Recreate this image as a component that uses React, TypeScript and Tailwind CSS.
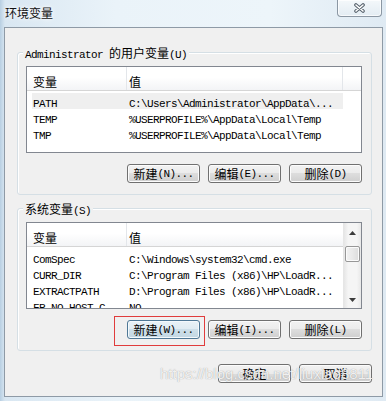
import React from "react";

const CJK_SPLIT = /([\u2E80-\u9FFF\uFF00-\uFFEF]+)/;
const CJK_TEST = /[\u2E80-\u9FFF\uFF00-\uFFEF]/;

function T({ s }: { s: string }) {
  const parts = s.split(CJK_SPLIT).filter(Boolean);
  return (
    <>
      {parts.map((p, i) =>
        CJK_TEST.test(p) ? (
          <span key={i} className="font-['Noto_Sans_CJK_SC',sans-serif] text-[12px] tracking-normal">
            {p}
          </span>
        ) : (
          <span key={i} className="font-['Liberation_Mono',monospace] text-[11px] tracking-[-0.6px] whitespace-pre">
            {p}
          </span>
        )
      )}
    </>
  );
}

function Btn({ label, focused }: { label: string; focused?: boolean }) {
  return (
    <div
      className={
        focused
          ? "w-[73px] h-[19px] flex items-center justify-center rounded-[3px] border border-[#4f7896] shadow-[inset_0_0_0_1px_#f4f9fc] bg-[linear-gradient(#e9f2f7_0%,#dfebf2_50%,#cddfe9_50%,#c2d7e3_100%)] text-black leading-[16px]"
          : "w-[73px] h-[19px] flex items-center justify-center rounded-[3px] border border-[#707070] shadow-[inset_0_0_0_1px_#fcfcfc] bg-[linear-gradient(#f2f2f2_0%,#ebebeb_50%,#dddddd_50%,#cfcfcf_100%)] text-black leading-[16px]"
      }
    >
      <T s={label} />
    </div>
  );
}

function Header() {
  return (
    <div className="h-[24px] shrink-0 flex border-b border-[#d5d5d5] bg-[linear-gradient(#ffffff_0%,#ffffff_45%,#f3f4f6_100%)] leading-[16px] text-black">
      <div className="w-[100px] pl-[6px] pt-[6px] border-r border-[#e3e6ea]">
        <T s="变量" />
      </div>
      <div className="w-[216px] pl-[2px] pt-[6px] border-r border-[#e3e6ea]">
        <T s="值" />
      </div>
      <div className="flex-1" />
    </div>
  );
}

function Rows({ rows, selected }: { rows: [string, string][]; selected?: number }) {
  return (
    <div className="pt-[2px] flex flex-col">
      {rows.map(([k, v], i) => (
        <div
          key={k}
          className={
            i === selected
              ? "ml-[5px] w-[311px] h-[16px] shrink-0 flex leading-[16px] text-black bg-[#efefef]"
              : "ml-[5px] w-[311px] h-[16px] shrink-0 flex leading-[16px] text-black"
          }
        >
          <div className="w-[95px] pl-[1px] whitespace-nowrap overflow-hidden">
            <T s={k} />
          </div>
          <div className="flex-1 pl-[2px] whitespace-nowrap overflow-hidden">
            <T s={v} />
          </div>
        </div>
      ))}
    </div>
  );
}

function UpArrow() {
  return (
    <svg width="7" height="4" viewBox="0 0 7 4">
      <path d="M3.5 0 L7 4 L0 4 Z" fill="#3c3c3c" />
    </svg>
  );
}
function DownArrow() {
  return (
    <svg width="7" height="4" viewBox="0 0 7 4">
      <path d="M0 0 L7 0 L3.5 4 Z" fill="#3c3c3c" />
    </svg>
  );
}

function GroupBox({
  label,
  children,
}: {
  label: string;
  children: React.ReactNode;
}) {
  return (
    <div className="relative w-[355px] rounded-[3px] border border-[#d5dfe5] shadow-[inset_1px_1px_0_#ffffff] pl-[8px] pr-[9px] pt-[13px] pb-[11px]">
      <div className="absolute -top-[9px] left-[5px] px-[2px] bg-[#f0f0f0] leading-[16px] text-black">
        <T s={label} />
      </div>
      {children}
    </div>
  );
}

export default function App() {
  const userRows: [string, string][] = [
    ["PATH", "C:\\Users\\Administrator\\AppData\\..."],
    ["TEMP", "%USERPROFILE%\\AppData\\Local\\Temp"],
    ["TMP", "%USERPROFILE%\\AppData\\Local\\Temp"],
  ];
  const sysRows: [string, string][] = [
    ["ComSpec", "C:\\Windows\\system32\\cmd.exe"],
    ["CURR_DIR", "C:\\Program Files (x86)\\HP\\LoadR..."],
    ["EXTRACTPATH", "D:\\Program Files (x86)\\HP\\LoadR..."],
    ["FP_NO_HOST_C...", "NO"],
  ];

  return (
    <div className="relative w-[386px] h-[401px] overflow-hidden flex flex-col bg-[linear-gradient(to_right,#b8cfe2_0px,#d9e7f2_5px,#eaf3f9_30%,#edf5fa_70%,#dfeaf3_100%)]">
      {/* Title bar */}
      <div className="h-[27px] shrink-0 flex items-start">
        <div className="pl-[5px] pt-[5px] leading-[16px] text-[#111] font-['Noto_Sans_CJK_SC',sans-serif] text-[12px] [text-shadow:0_0_6px_#ffffff,0_0_3px_#ffffff]">
          环境变量
        </div>
        <div className="ml-auto mr-[4px] w-[45px] h-[17px] flex items-center justify-center rounded-b-[4px] border border-t-0 border-[#8b97a3] shadow-[inset_0_0_0_1px_rgba(255,255,255,0.7)] bg-[linear-gradient(#f4f8fb,#e3ecf3)]">
          <svg width="13" height="10" viewBox="0 0 13 10">
            <path d="M3 2 L10 8 M10 2 L3 8" stroke="#56616c" strokeWidth="3.6" strokeLinecap="round" fill="none" />
            <path d="M3 2 L10 8 M10 2 L3 8" stroke="#ffffff" strokeWidth="1.6" strokeLinecap="round" fill="none" />
          </svg>
        </div>
      </div>

      {/* Body */}
      <div className="ml-[4px] w-[379px] h-[370px] shrink-0 border border-[#8e9aa6] bg-[#f0f0f0] pl-[12px] pr-[10px] flex flex-col">
        <div className="mt-[24px]">
          <GroupBox label="Administrator 的用户变量(U)">
            <div className="h-[87px] border border-[#828790] bg-white overflow-hidden flex flex-col">
              <Header />
              <Rows rows={userRows} selected={0} />
            </div>
            <div className="mt-[11px] flex justify-end gap-[8px]">
              <Btn label="新建(N)..." />
              <Btn label="编辑(E)..." />
              <Btn label="删除(D)" />
            </div>
          </GroupBox>
        </div>

        <div className="mt-[13px]">
          <GroupBox label="系统变量(S)">
            <div className="h-[87px] border border-[#828790] bg-white overflow-hidden flex">
              <div className="w-[316px] flex flex-col overflow-hidden">
                <div className="h-[24px] shrink-0 flex border-b border-[#d5d5d5] bg-[linear-gradient(#ffffff_0%,#ffffff_45%,#f3f4f6_100%)] leading-[16px] text-black">
                  <div className="w-[100px] pl-[6px] pt-[6px] border-r border-[#e3e6ea]">
                    <T s="变量" />
                  </div>
                  <div className="flex-1 pl-[2px] pt-[6px]">
                    <T s="值" />
                  </div>
                </div>
                <Rows rows={sysRows} />
              </div>
              <div className="w-[18px] flex flex-col border-l border-[#e6e6e6] bg-[linear-gradient(to_right,#e6e6e6,#f5f5f5_25%,#f5f5f5_75%,#e8e8e8)]">
                <div className="h-[17px] shrink-0 flex items-center justify-center pt-[3px]">
                  <UpArrow />
                </div>
                <div className="mt-[6px] mx-[1px] h-[16px] shrink-0 rounded-[2px] border border-[#979797] shadow-[inset_0_0_0_1px_#fbfbfb] bg-[linear-gradient(to_right,#f2f2f2,#e9e9e9_50%,#dcdcdc)]" />
                <div className="flex-1" />
                <div className="h-[17px] shrink-0 flex items-center justify-center">
                  <DownArrow />
                </div>
              </div>
            </div>
            <div className="mt-[11px] flex justify-end gap-[8px]">
              <div className="relative">
                <Btn label="新建(W)..." focused />
                <span className="absolute -left-[13px] -top-[4px] w-[91px] h-[30px] border border-[#e03c3c]" />
              </div>
              <Btn label="编辑(I)..." />
              <Btn label="删除(L)" />
            </div>
          </GroupBox>
        </div>

        <div className="mt-[13px] w-[355px] flex justify-end gap-[8px]">
          <Btn label="确定" />
          <Btn label="取消" />
        </div>
      </div>

      {/* Watermark */}
      <div className="absolute left-[160px] top-[365px] leading-[18px] text-[15px] font-['Liberation_Sans',sans-serif] text-[rgba(255,255,255,0.85)] [text-shadow:0_0_1px_rgba(110,110,110,0.7)] whitespace-nowrap pointer-events-none">
        https://blog.csdn.net/liuxiao8811
      </div>
    </div>
  );
}
